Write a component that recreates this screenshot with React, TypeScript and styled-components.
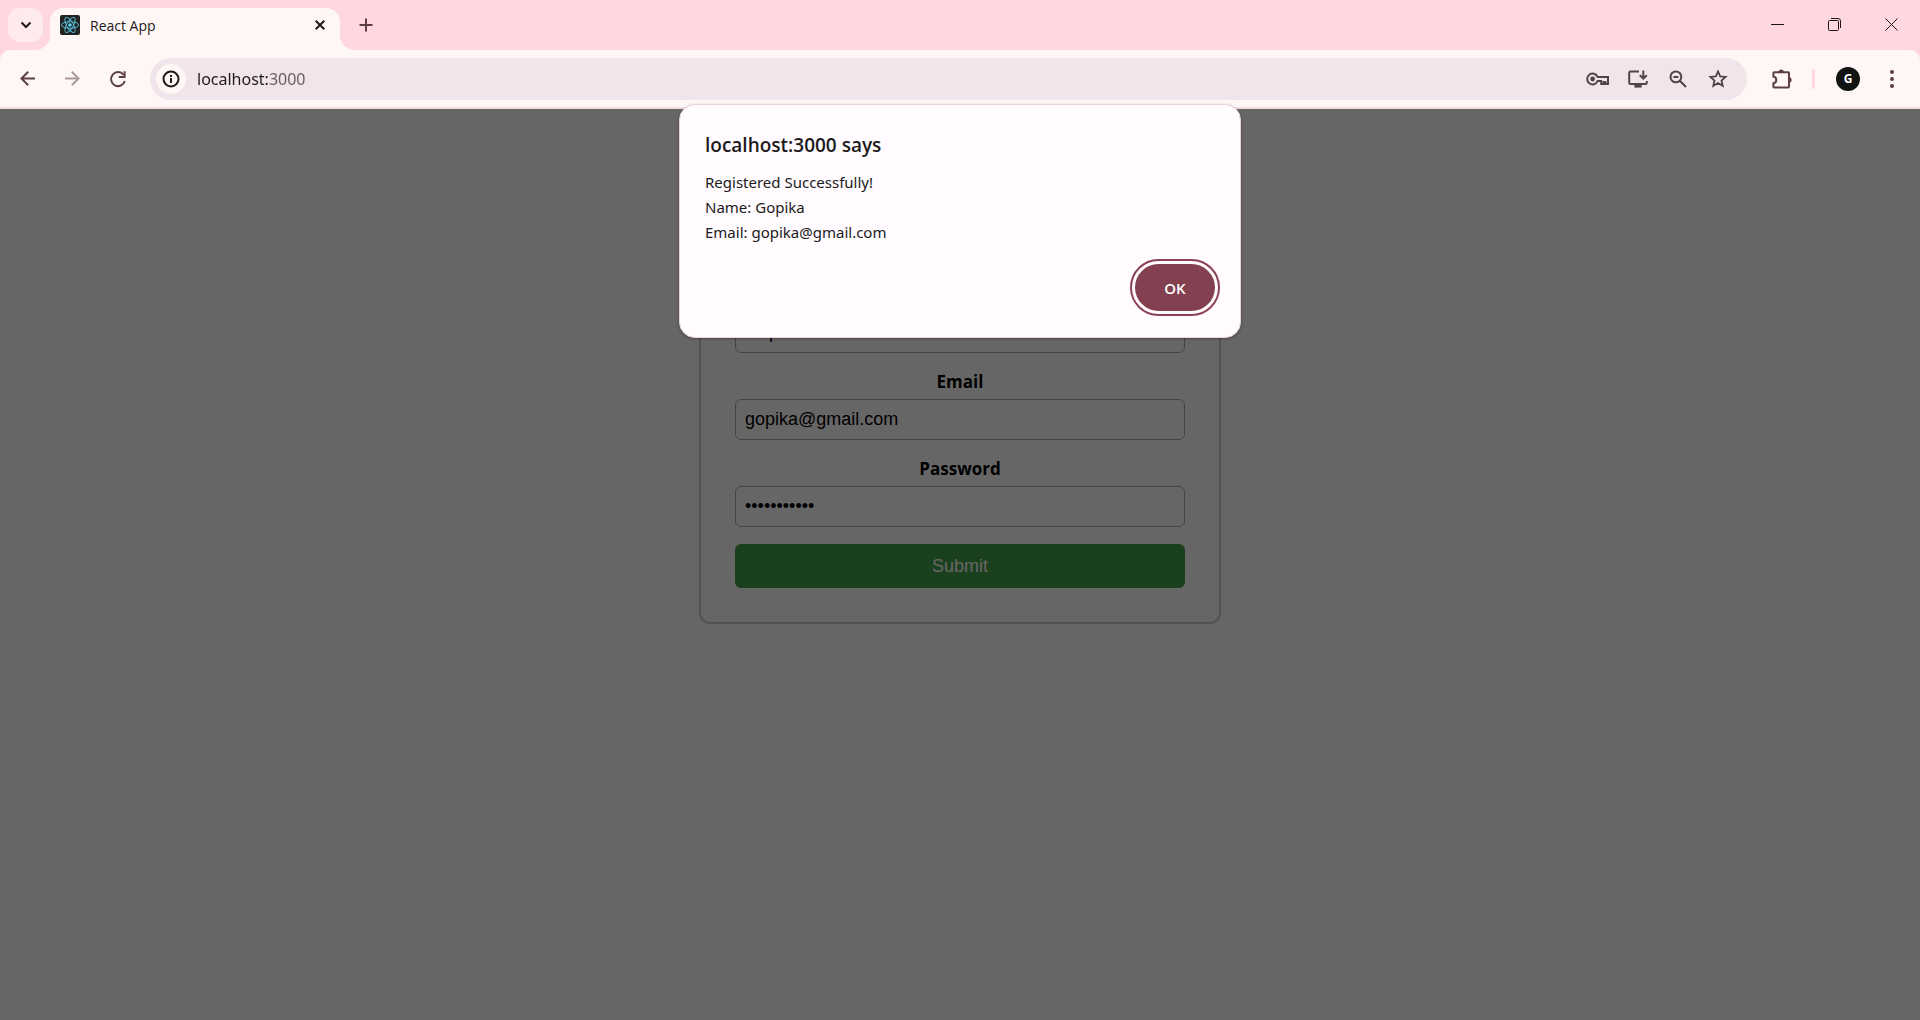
import React, { useState } from 'react';
import styled, { createGlobalStyle } from 'styled-components';

const uiFont = '"Open Sans", "Noto Sans", sans-serif';
const wideFont = '"Noto Sans", "Open Sans", sans-serif';
const formFont = '"Liberation Sans", Arial, sans-serif';

const GlobalStyle = createGlobalStyle`
  *, *::before, *::after { box-sizing: border-box; }
  body { margin: 0; font-family: ${uiFont}; }
  button, input { font: inherit; color: inherit; }
  button { border: 0; padding: 0; background: none; cursor: pointer; }
  svg { display: block; flex: none; }
`;

const Browser = styled.div`
  display: flex;
  flex-direction: column;
  min-height: 100vh;
  background: #ffd8df;
`;

const TabStrip = styled.header`
  display: flex;
  align-items: flex-end;
  height: 50px;
  padding-left: 8px;
`;

const TabSearch = styled.button`
  display: grid;
  place-items: center;
  width: 35px;
  height: 34px;
  margin: 0 7px 8px 0;
  border-radius: 12px;
  background: #ffebee;
  color: #201a1b;
`;

const Tab = styled.div`
  position: relative;
  display: flex;
  align-items: center;
  gap: 10px;
  width: 290px;
  height: 42px;
  padding: 0 10px 8px;
  border-radius: 14px 14px 0 0;
  background: #fff7f5;
  color: #201a1b;
  font-size: 14px;

  &::before,
  &::after {
    content: '';
    position: absolute;
    bottom: 0;
    width: 15px;
    height: 15px;
  }
  &::before {
    right: 100%;
    background: radial-gradient(circle at 0 0, transparent 15px, #fff7f5 15px);
  }
  &::after {
    left: 100%;
    background: radial-gradient(circle at 100% 0, transparent 15px, #fff7f5 15px);
  }
`;

const TabTitle = styled.span`
  flex: 1;
`;

const TabClose = styled.button`
  display: grid;
  place-items: center;
  width: 20px;
  height: 20px;
`;

const NewTab = styled.button`
  display: grid;
  place-items: center;
  width: 32px;
  height: 34px;
  margin: 0 0 8px 10px;
  color: #5c3f44;
`;

const WindowControls = styled.div`
  display: flex;
  align-self: stretch;
  margin-left: auto;
`;

const WindowButton = styled.button`
  display: grid;
  place-items: center;
  width: 57px;
  height: 49px;
  color: #1c1416;
`;

const Toolbar = styled.nav`
  display: flex;
  align-items: center;
  height: 59px;
  padding: 0 6px 0 5px;
  border-bottom: 2px solid #f3dde0;
  border-radius: 10px 10px 0 0;
  background: #fff7f5;
  color: #5c3f44;
`;

const ToolButton = styled.button<{ $faded?: boolean }>`
  display: grid;
  place-items: center;
  width: 45px;
  height: 42px;
  opacity: ${(p) => (p.$faded ? 0.5 : 1)};
`;

const Omnibox = styled.div`
  display: flex;
  flex: 1;
  align-items: center;
  height: 42px;
  margin: 0 12px 0 10px;
  padding: 0 9px 0 6px;
  border-radius: 21px;
  background: #f1e4ea;
  color: #514347;
`;

const SiteInfo = styled.button`
  display: grid;
  place-items: center;
  width: 30px;
  height: 30px;
  border-radius: 50%;
  background: #fff7f5;
  color: #201a1b;
`;

const Address = styled.input`
  flex: 1;
  min-width: 0;
  margin-left: 11px;
  padding: 0;
  border: 0;
  outline: 0;
  background: linear-gradient(to right, #201a1b 72px, #67595d 72px);
  background-clip: text;
  color: transparent;
  font-family: ${wideFont};
  font-size: 16px;
  line-height: 24px;
`;

const BoxButton = styled.button`
  display: grid;
  place-items: center;
  width: 40px;
  height: 40px;
`;

const Divider = styled.span`
  width: 3px;
  height: 20px;
  margin: 0 21px 0 8px;
  border-radius: 2px;
  background: #ffd8df;
`;

const Avatar = styled.button`
  width: 24px;
  height: 24px;
  margin-right: 9px;
  border-radius: 50%;
  background: #121414;
  color: #fff;
  font-size: 12px;
  font-weight: 700;
  line-height: 24px;
`;

const Page = styled.main`
  position: relative;
  display: flex;
  flex: 1;
  flex-direction: column;
  align-items: center;
  background: #fff;
`;

const Scrim = styled.div`
  position: absolute;
  inset: 0;
  background: rgba(0, 0, 0, 0.6);
`;

const Card = styled.form`
  display: flex;
  flex-direction: column;
  gap: 17px;
  width: 522px;
  max-width: 100%;
  margin-top: 138px;
  padding: 34px;
  border: 2px solid #ccc;
  border-radius: 11px;
  color: #000;
`;

const Field = styled.div`
  display: flex;
  flex-direction: column;
  gap: 5px;
  text-align: center;
`;

const Label = styled.label`
  font-size: 17px;
  font-weight: 700;
  line-height: 24px;
`;

const TextBox = styled.input`
  height: 41px;
  padding: 0 9px;
  border: 1px solid #aaa;
  border-radius: 6px;
  background: #fff;
  font-family: ${formFont};
  font-size: 18px;
`;

const Submit = styled.button`
  height: 44px;
  border-radius: 6px;
  background: #45a049;
  color: #fff;
  font-family: ${formFont};
  font-size: 18px;
`;

const Dialog = styled.section`
  position: absolute;
  top: -5px;
  left: 50%;
  display: flex;
  flex-direction: column;
  width: 562px;
  max-width: 100%;
  padding: 25px 25px 26px;
  transform: translateX(-50%);
  border: 1px solid #e9d6d9;
  border-radius: 16px;
  background: #fffbff;
  box-shadow: 0 1px 3px rgba(0, 0, 0, 0.3);
  color: #201a1b;
`;

const DialogTitle = styled.h1`
  margin: 0 0 10px;
  font-size: 19px;
  font-weight: 600;
  line-height: 30px;
`;

const DialogText = styled.p`
  margin: 0;
  font-family: ${wideFont};
  font-size: 15px;
  line-height: 25px;
  white-space: pre-line;
`;

const OkButton = styled.button`
  align-self: flex-end;
  width: 80px;
  height: 47px;
  margin-top: 19px;
  border-radius: 24px;
  outline: 2px solid #8b4255;
  outline-offset: 3px;
  background: #834050;
  color: #fff;
  font-size: 15px;
  font-weight: 600;
`;

const Stroke = ({ w, h = w, d, sw = 2 }: { w: number; h?: number; d: string; sw?: number }) => (
  <svg width={w} height={h} viewBox={`0 0 ${w} ${h}`} fill="none" stroke="currentColor" strokeWidth={sw}>
    <path d={d} />
  </svg>
);

const ReactLogo = () => (
  <svg width="20" height="20" viewBox="0 0 20 20">
    <rect width="20" height="20" rx="2" fill="#222" />
    <g fill="none" stroke="#58c4dc" strokeWidth="0.9">
      <ellipse cx="10" cy="10" rx="8.6" ry="3.3" />
      <ellipse cx="10" cy="10" rx="8.6" ry="3.3" transform="rotate(60 10 10)" />
      <ellipse cx="10" cy="10" rx="8.6" ry="3.3" transform="rotate(120 10 10)" />
    </g>
    <circle cx="10" cy="10" r="1.7" fill="#61dafb" />
  </svg>
);

const InfoIcon = () => (
  <svg width="18" height="18" viewBox="0 0 18 18" fill="none" stroke="currentColor" strokeWidth="2">
    <circle cx="9" cy="9" r="7.5" />
    <path d="M9 8v5M9 5v2" />
  </svg>
);

const RefreshIcon = () => (
  <svg width="18" height="18" viewBox="0 0 18 18" fill="none" stroke="currentColor" strokeWidth="2">
    <path d="M14.6 4.8A7 7 0 1 0 15.8 11" />
    <path d="M15.6 1.2V7H9.8" />
  </svg>
);

const KeyIcon = () => (
  <svg width="24" height="16" viewBox="0 0 24 16" fill="none" stroke="currentColor" strokeWidth="2">
    <path d="M11.6 6A5.4 5.4 0 1 0 11.6 10H15.2V13H17.6V11H19.4V13H22V6Z" />
    <circle cx="6.6" cy="8" r="2.4" fill="currentColor" stroke="none" />
  </svg>
);

const InstallIcon = () => (
  <svg width="20" height="18" viewBox="0 0 20 18" fill="none" stroke="currentColor" strokeWidth="2">
    <path d="M11 1.5H2.5Q1.2 1.5 1.2 2.8V12.7Q1.2 14 2.5 14H17.5Q18.8 14 18.8 12.7V11" />
    <path d="M15.3 0.6V8M11.8 5.2L15.3 8.7L18.8 5.2" />
    <path d="M6.4 14H13.6V17.6H6.4Z" fill="currentColor" stroke="none" />
  </svg>
);

const ZoomOutIcon = () => (
  <svg width="18" height="18" viewBox="0 0 18 18" fill="none" stroke="currentColor" strokeWidth="2">
    <circle cx="6.9" cy="6.9" r="5.4" />
    <path d="M4.4 6.9H9.4M10.8 10.8L17 17" />
  </svg>
);

const StarIcon = () => (
  <svg width="20" height="19" viewBox="0 0 20 19" fill="none" stroke="currentColor" strokeWidth="1.8">
    <path d="M10 2.4L12.2 7.4L17.6 7.9L13.5 11.5L14.7 16.8L10 14L5.3 16.8L6.5 11.5L2.4 7.9L7.8 7.4Z" />
  </svg>
);

const ExtensionIcon = () => (
  <svg width="22" height="22" viewBox="0 0 22 22" fill="none" stroke="currentColor" strokeWidth="2">
    <path d="M3.2 4.2H17.2Q18 4.2 18 5V18.8Q18 19.6 17.2 19.6H3.2Q2.4 19.6 2.4 18.8V15.2C6.2 14.6 6.2 9.2 2.4 8.6V5Q2.4 4.2 3.2 4.2Z" />
    <path d="M7.6 4A2.6 2.6 0 0 1 12.8 4ZM18 9.3A2.6 2.6 0 0 1 18 14.5Z" fill="currentColor" stroke="none" />
  </svg>
);

const MenuIcon = () => (
  <svg width="4" height="18" viewBox="0 0 4 18" fill="currentColor">
    <circle cx="2" cy="2" r="2" />
    <circle cx="2" cy="9" r="2" />
    <circle cx="2" cy="16" r="2" />
  </svg>
);

const RestoreIcon = () => (
  <svg width="13" height="13" viewBox="0 0 13 13" fill="none" stroke="currentColor">
    <rect x="0.5" y="2.5" width="10" height="10" rx="1" />
    <path d="M3 0.5H10Q12.5 0.5 12.5 3V10" />
  </svg>
);

export default function App() {
  const [open, setOpen] = useState(true);
  const [name, setName] = useState('Gopika');
  const [email, setEmail] = useState('gopika@gmail.com');
  const [password, setPassword] = useState('password123');

  return (
    <>
      <GlobalStyle />
      <Browser>
        <TabStrip>
          <TabSearch aria-label="Search tabs">
            <Stroke w={12} h={8} d="M1.5 1.5L6 6L10.5 1.5" />
          </TabSearch>
          <Tab>
            <ReactLogo />
            <TabTitle>React App</TabTitle>
            <TabClose aria-label="Close tab">
              <Stroke w={10} d="M0.7 0.7L9.3 9.3M9.3 0.7L0.7 9.3" />
            </TabClose>
          </Tab>
          <NewTab aria-label="New tab">
            <Stroke w={14} d="M7 0.5V13.5M0.5 7H13.5" />
          </NewTab>
          <WindowControls>
            <WindowButton aria-label="Minimize">
              <Stroke w={13} sw={1} d="M0 6.5H13" />
            </WindowButton>
            <WindowButton aria-label="Restore">
              <RestoreIcon />
            </WindowButton>
            <WindowButton aria-label="Close window">
              <Stroke w={13} sw={1} d="M0.5 0.5L12.5 12.5M12.5 0.5L0.5 12.5" />
            </WindowButton>
          </WindowControls>
        </TabStrip>

        <Toolbar>
          <ToolButton aria-label="Back">
            <Stroke w={15} d="M15 7.5H1.5M8.2 0.8L1.5 7.5L8.2 14.2" />
          </ToolButton>
          <ToolButton aria-label="Forward" $faded>
            <Stroke w={15} d="M0 7.5H13.5M6.8 0.8L13.5 7.5L6.8 14.2" />
          </ToolButton>
          <ToolButton aria-label="Reload">
            <RefreshIcon />
          </ToolButton>
          <Omnibox>
            <SiteInfo aria-label="Site information">
              <InfoIcon />
            </SiteInfo>
            <Address aria-label="Address" defaultValue="localhost:3000" spellCheck={false} />
            <BoxButton aria-label="Passwords"><KeyIcon /></BoxButton>
            <BoxButton aria-label="Install app"><InstallIcon /></BoxButton>
            <BoxButton aria-label="Zoom"><ZoomOutIcon /></BoxButton>
            <BoxButton aria-label="Bookmark"><StarIcon /></BoxButton>
          </Omnibox>
          <ToolButton aria-label="Extensions">
            <ExtensionIcon />
          </ToolButton>
          <Divider />
          <Avatar aria-label="Profile G">G</Avatar>
          <ToolButton aria-label="Menu">
            <MenuIcon />
          </ToolButton>
        </Toolbar>

        <Page>
          <Card onSubmit={(e) => { e.preventDefault(); setOpen(true); }}>
            <Field>
              <Label htmlFor="name">Name</Label>
              <TextBox id="name" value={name} onChange={(e) => setName(e.target.value)} />
            </Field>
            <Field>
              <Label htmlFor="email">Email</Label>
              <TextBox id="email" type="email" value={email} onChange={(e) => setEmail(e.target.value)} />
            </Field>
            <Field>
              <Label htmlFor="password">Password</Label>
              <TextBox id="password" type="password" value={password} onChange={(e) => setPassword(e.target.value)} />
            </Field>
            <Submit type="submit">Submit</Submit>
          </Card>
          {open && (
            <>
              <Scrim />
              <Dialog role="alertdialog" aria-labelledby="dialog-title">
                <DialogTitle id="dialog-title">localhost:3000 says</DialogTitle>
                <DialogText>{`Registered Successfully!\nName: ${name}\nEmail: ${email}`}</DialogText>
                <OkButton type="button" onClick={() => setOpen(false)}>OK</OkButton>
              </Dialog>
            </>
          )}
        </Page>
      </Browser>
    </>
  );
}
